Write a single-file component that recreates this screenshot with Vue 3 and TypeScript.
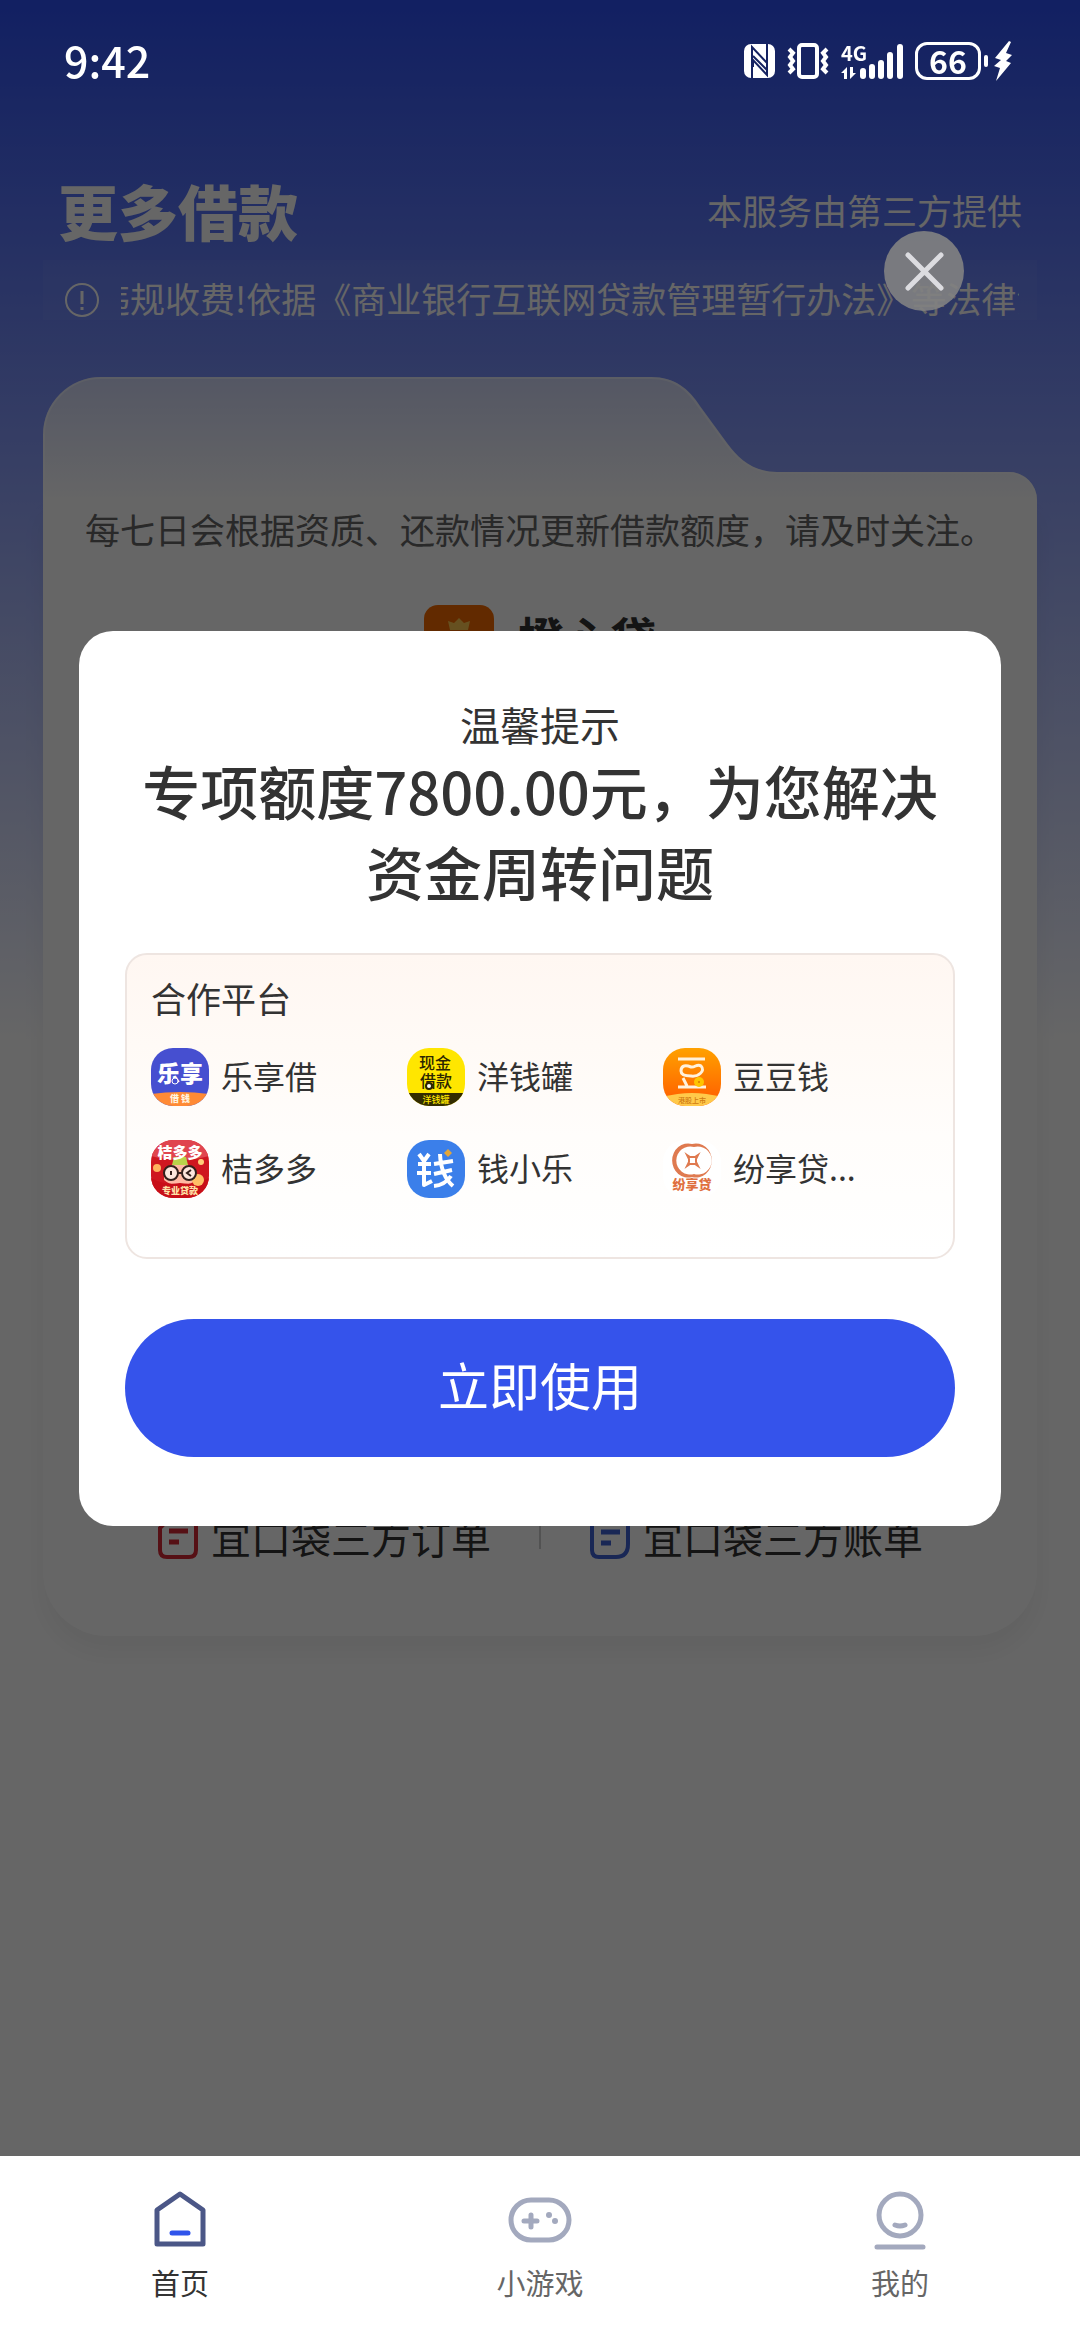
<script setup lang="ts">
import { ref } from 'vue'

interface Partner {
  id: string
  name: string
}

interface Tab {
  id: string
  label: string
}

const partners: Partner[] = [
  { id: 'lexiang', name: '乐享借' },
  { id: 'yangqian', name: '洋钱罐' },
  { id: 'doudou', name: '豆豆钱' },
  { id: 'jieduo', name: '桔多多' },
  { id: 'qianxiaole', name: '钱小乐' },
  { id: 'fenxiang', name: '纷享贷...' },
]

const tabs: Tab[] = [
  { id: 'home', label: '首页' },
  { id: 'game', label: '小游戏' },
  { id: 'mine', label: '我的' },
]

const activeTab = ref('home')
const dialogOpen = ref(true)
</script>

<template>
  <div class="page">
    <div class="status">
      <span class="status__time">9:42</span>
      <div class="status__icons">
        <svg width="31" height="34" viewBox="0 0 31 34">
          <rect x="0" y="0" width="31" height="34" rx="7" fill="#fff" />
          <path d="M8 34V3L23 19V12M23 0V31L9 16V23M9 12L23 26" fill="none" stroke="#152261" stroke-width="2" />
          <path d="M10 22L20 33H10Z" fill="#fff" />
        </svg>
        <svg width="42" height="36" viewBox="0 0 42 36" fill="none" stroke="#fff">
          <rect x="12" y="2" width="18" height="32" rx="3" stroke-width="4" />
          <path d="M2 6L6 10L3 14L6 18L3 22L6 26L2 30M40 6L36 10L39 14L36 18L39 22L36 26L40 30" stroke-width="4" />
        </svg>
        <svg class="signal" width="62" height="38" viewBox="0 0 62 38" fill="#fff">
          <text x="0" y="19" class="status__net">4G</text>
          <path d="M6 37V25L0 31H3V37ZM9 25V37L15 31H12V25Z" />
          <rect x="19" y="26" width="6" height="11" rx="3" />
          <rect x="28" y="22" width="6" height="15" rx="3" />
          <rect x="37" y="18" width="6" height="19" rx="3" />
          <rect x="46" y="10" width="6" height="27" rx="3" />
          <rect x="56" y="2" width="6" height="35" rx="3" />
        </svg>
        <span class="battery">
          <span class="battery__level">66</span>
          <span class="battery__nub"></span>
          <svg width="18" height="40" viewBox="0 0 18 40" fill="#fff">
            <path d="M15 0L1 17L7 19L0 25L6 27L2 40L17 22L12 20L18 14L12 12L17 1Z" />
          </svg>
        </span>
      </div>
    </div>

    <header class="head">
      <h1 class="head__title">更多借款</h1>
      <span class="head__note">本服务由第三方提供</span>
    </header>

    <div class="notice">
      <svg class="notice__icon" width="36" height="36" viewBox="0 0 36 36" fill="none" stroke="#fff" stroke-width="2">
        <circle cx="18" cy="18" r="16" />
        <path d="M18 9V22M18 25V28" stroke-width="3" />
      </svg>
      <div class="notice__text">违规收费!依据《商业银行互联网贷款管理暂行办法》等法律法规</div>
    </div>

    <main class="card">
      <svg class="card__top" viewBox="0 0 994 123">
        <defs>
          <linearGradient id="cardTop" x1="0" y1="0" x2="0" y2="1">
            <stop offset="0" stop-color="#d2d9fa" />
            <stop offset="1" stop-color="#ffffff" />
          </linearGradient>
        </defs>
        <path d="M0 124V58A58 58 0 0 1 58 0H608C632 0 646 12 657 29L684 66C696 82 710 95 734 95H966A28 28 0 0 1 994 123V124Z" fill="url(#cardTop)" />
        <path d="M1 123V58A57 57 0 0 1 58 1H608C632 1 645 13 656 30L683 67C695 83 709 96 734 96H966A27 27 0 0 1 993 123" fill="none" stroke="#fff" stroke-opacity=".45" stroke-width="2" />
      </svg>
      <div class="card__body">
        <div>
          <p class="card__tip">每七日会根据资质、还款情况更新借款额度，请及时关注。</p>
          <div class="product">
            <svg width="70" height="70" viewBox="0 0 70 70">
              <rect width="70" height="70" rx="14" fill="#f56a00" />
              <path d="M24 16L30 18L35 13L40 18L46 16L44 25H26ZM26 28H44L52 44Q54 58 42 58H28Q16 58 18 44Z" fill="#ffc850" />
            </svg>
            <strong class="product__name">橙心贷</strong>
          </div>
        </div>
        <div class="links">
          <a class="links__item" href="#orders">
            <svg width="42" height="46" viewBox="0 0 42 46" fill="none" stroke="#d62a36" stroke-width="4">
              <path d="M14 3H32Q39 3 39 10V36Q39 43 32 43H10Q3 43 3 36V14Z" />
              <path d="M12 17H31M12 28H22" stroke-width="5" />
            </svg>
            宜口袋三方订单
          </a>
          <span class="links__line"></span>
          <a class="links__item" href="#bills">
            <svg width="42" height="46" viewBox="0 0 42 46" fill="none" stroke="#3f62d4" stroke-width="4">
              <path d="M10 3H32Q39 3 39 10V30Q39 43 27 43H10Q3 43 3 36V10Q3 3 10 3Z" />
              <path d="M12 18H31M12 29H22" stroke-width="5" />
            </svg>
            宜口袋三方账单
          </a>
        </div>
      </div>
    </main>

    <div v-if="dialogOpen" class="overlay">
      <button class="close" type="button" aria-label="关闭" @click="dialogOpen = false">
        <svg width="80" height="80" viewBox="0 0 80 80">
          <path d="M24 24L57 57M57 24L24 57" stroke="#dcdce0" stroke-width="5" stroke-linecap="round" />
        </svg>
      </button>
      <section class="dialog" role="dialog" aria-modal="true">
        <p class="dialog__hint">温馨提示</p>
        <h2 class="dialog__title">专项额度7800.00元，为您解决资金周转问题</h2>
        <div class="panel">
          <h3 class="panel__title">合作平台</h3>
          <ul class="panel__grid">
            <li v-for="p in partners" :key="p.id" class="partner">
              <svg class="partner__logo" viewBox="0 0 58 58">
                <template v-if="p.id === 'lexiang'">
                  <rect width="58" height="58" fill="#464fd0" />
                  <path d="M0 46Q29 42 58 46V58H0Z" fill="#ff8a35" />
                  <text x="29" y="34" class="logo-text" font-size="23" fill="#fff">乐享</text>
                  <circle cx="24" cy="33" r="3" fill="#464fd0" stroke="#fff" />
                  <text x="29" y="54" class="logo-text" font-size="9" fill="#fff3df">借 钱</text>
                </template>
                <template v-else-if="p.id === 'yangqian'">
                  <rect width="58" height="58" fill="#ffe600" />
                  <rect y="45" width="58" height="13" fill="#332c00" />
                  <text x="28" y="21" class="logo-line" font-size="16" fill="#2b2500">现金</text>
                  <text x="29" y="39" class="logo-line" font-size="16" fill="#2b2500">借款</text>
                  <circle cx="22" cy="38" r="3" fill="#fff" stroke="#2b2500" stroke-width="2" />
                  <text x="29" y="55" class="logo-line" font-size="9" fill="#ffe600">洋钱罐</text>
                </template>
                <template v-else-if="p.id === 'doudou'">
                  <defs>
                    <linearGradient id="bean" x1="0" y1="0" x2="0" y2="1">
                      <stop offset="0" stop-color="#ffa100" />
                      <stop offset="1" stop-color="#ff5a00" />
                    </linearGradient>
                  </defs>
                  <rect width="58" height="58" fill="url(#bean)" />
                  <path d="M0 49Q29 41 58 49V58H0Z" fill="#ffc94a" />
                  <path d="M15 11H42M15 39H43M20 30L24 38" stroke="#fff1dc" stroke-width="3" fill="none" />
                  <path d="M18 23C18 17 23 17 28 19C32 20 34 15 38 18C43 23 35 29 28 28C22 28 18 27 18 23Z" stroke="#fff1dc" stroke-width="3" fill="none" />
                  <circle cx="36" cy="34" r="5" fill="#ffc400" />
                  <circle cx="36" cy="34" r="1" fill="#d67a00" />
                  <text x="29" y="55" class="logo-line" font-size="7" fill="#d07a10">港股上市</text>
                </template>
                <template v-else-if="p.id === 'jieduo'">
                  <rect width="58" height="58" fill="#cf1720" />
                  <path d="M0 0H58V16Q29 24 0 16Z" fill="#e0454f" />
                  <circle cx="6" cy="28" r="4" fill="#ffb25e" />
                  <circle cx="50" cy="22" r="3" fill="#ffcf7a" />
                  <path d="M13 40Q12 24 29 23Q46 24 45 40Q38 46 29 44Q20 46 13 40Z" fill="#ffb9a3" />
                  <path d="M0 38Q14 46 29 43Q44 46 58 38V58H0Z" fill="#c80f18" />
                  <circle cx="47" cy="40" r="6" fill="#ffbf66" />
                  <path d="M23 17H35L37 25H21Z" fill="#b9d24a" />
                  <text x="29" y="18" class="logo-text" font-size="15" fill="#fff">桔多多</text>
                  <g fill="#fde6dd" stroke="#33201c" stroke-width="2">
                    <circle cx="20" cy="33" r="7" />
                    <circle cx="38" cy="33" r="7" />
                    <path d="M27 33H31M20 31V35M40 30L36 33L40 36" fill="none" />
                  </g>
                  <text x="29" y="54" class="logo-text" font-size="9" fill="#ffe3a8">专业贷款</text>
                </template>
                <template v-else-if="p.id === 'qianxiaole'">
                  <rect width="58" height="58" fill="#3b7fea" />
                  <g fill="none" stroke="#fff" stroke-width="4" stroke-linejoin="round">
                    <path d="M12 14L17 21L22 14M11 24H24M10 33H24M17 21V45L25 41" />
                    <path d="M27 24L46 21M27 34L45 30M33 14Q34 36 46 46M44 36Q38 45 27 46" />
                  </g>
                  <path d="M41 9L45 13L41 17L37 13Z" fill="#e3a63a" />
                </template>
                <template v-else>
                  <rect width="58" height="58" fill="#fff" />
                  <path fill-rule="evenodd" d="M29 4A16 17 0 1 0 29 37A16 17 0 1 0 29 4ZM31 7A14 14 0 1 1 31 34A14 14 0 1 1 31 7Z" fill="#df7a50" />
                  <path d="M24 15L27 17H32L35 15L33 19V22L35 26L32 24H27L24 26L26 22V19Z" fill="none" stroke="#df7a50" stroke-width="2" />
                  <text x="29" y="49" class="logo-text" font-size="13" fill="#df7040">纷享贷</text>
                </template>
              </svg>
              <span class="partner__name">{{ p.name }}</span>
            </li>
          </ul>
        </div>
        <button class="cta" type="button">立即使用</button>
      </section>
    </div>

    <nav class="tabs">
      <button
        v-for="t in tabs"
        :key="t.id"
        type="button"
        class="tab"
        :class="{ 'tab--active': t.id === activeTab }"
        @click="activeTab = t.id"
      >
        <svg width="72" height="72" viewBox="0 0 72 72" fill="none" stroke-width="5" stroke-linecap="round" stroke-linejoin="round">
          <template v-if="t.id === 'home'">
            <path d="M36 10L59 26V60H13V26Z" stroke="#4b5787" />
            <path d="M28 49H44" stroke="#2f54eb" />
          </template>
          <g v-else-if="t.id === 'game'" stroke="#a3a9be">
            <rect x="7" y="16" width="58" height="40" rx="20" />
            <path d="M20 37H33M27 31V43" />
            <circle cx="45" cy="31" r="3" fill="#a3a9be" stroke="none" />
            <circle cx="51" cy="37" r="3" fill="#a3a9be" stroke="none" />
          </g>
          <g v-else stroke="#a3a9be">
            <circle cx="36" cy="31" r="21" />
            <path d="M31 41Q36 43 41 41M13 63H59" />
          </g>
        </svg>
        <span>{{ t.label }}</span>
      </button>
    </nav>
  </div>
</template>

<style>
body {
  background: #fff;
}
</style>

<style scoped>
.page {
  min-height: 100vh;
  box-sizing: border-box;
  padding-bottom: 184px;
  background: linear-gradient(180deg, #2d50f5 0, #fff 1040px);
  font-family: "Noto Sans CJK SC", "Noto Sans", sans-serif;
  color: #333;
}

h1,
h2,
h3,
p,
ul {
  margin: 0;
  padding: 0;
}

button {
  border: 0;
  padding: 0;
  font-family: inherit;
  cursor: pointer;
}

.status {
  position: relative;
  z-index: 3;
  display: flex;
  align-items: center;
  justify-content: space-between;
  height: 122px;
  padding: 0 68px 0 64px;
  color: #fff;
}

.status__time {
  padding-bottom: 4px;
  font-size: 43px;
  font-weight: 500;
}

.status__icons {
  display: flex;
  align-items: center;
  gap: 12px;
}

.status__net {
  font-size: 20px;
  font-weight: 700;
}

.signal {
  overflow: visible;
}

.battery {
  display: flex;
  align-items: center;
}

.battery__level {
  box-sizing: border-box;
  width: 66px;
  height: 38px;
  border: 3px solid #fff;
  border-radius: 12px;
  font-size: 32px;
  font-weight: 700;
  line-height: 30px;
  text-align: center;
}

.battery__nub {
  width: 4px;
  height: 12px;
  margin: 0 6px 0 3px;
  border-radius: 2px;
  background: #fff;
}

.head {
  display: flex;
  align-items: center;
  justify-content: space-between;
  padding: 43px 58px 5px;
  color: #fff;
}

.head__title {
  font-size: 60px;
  font-weight: 900;
  line-height: 90px;
}

.head__note {
  font-size: 35px;
  line-height: 50px;
}

.notice {
  display: flex;
  align-items: flex-end;
  gap: 21px;
  margin: 0 43px;
  padding: 18px 18px 2px 21px;
  background: rgba(255, 255, 255, 0.04);
  color: #fff;
}

.notice__icon {
  flex: none;
}

.notice__text {
  flex: 1;
  min-width: 0;
  overflow: hidden;
  white-space: nowrap;
  text-indent: -26px;
  font-size: 35px;
  line-height: 40px;
}

.card {
  margin: 57px 43px 0;
}

.card__top {
  display: block;
  width: 100%;
  height: auto;
}

.card__body {
  display: flex;
  flex-direction: column;
  justify-content: space-between;
  box-sizing: border-box;
  min-height: 1136px;
  padding: 4px 0 74px;
  border-radius: 0 0 64px 64px;
  background: #fff;
  box-shadow: 0 16px 24px rgba(0, 0, 0, 0.05);
}

.card__tip {
  font-size: 35px;
  line-height: 50px;
  text-align: center;
  white-space: nowrap;
  color: #666;
}

.product {
  display: flex;
  align-items: center;
  justify-content: center;
  gap: 24px;
  margin-top: 51px;
}

.product__name {
  padding-bottom: 8px;
  font-size: 46px;
  font-weight: 700;
  line-height: 62px;
}

.links {
  display: flex;
  align-items: center;
  justify-content: center;
  gap: 48px;
}

.links__item {
  display: flex;
  align-items: center;
  gap: 12px;
  font-size: 40px;
  line-height: 50px;
  color: #333;
  text-decoration: none;
}

.links__line {
  width: 2px;
  height: 24px;
  background: #ccc;
}

.overlay {
  position: fixed;
  inset: 0 0 184px;
  z-index: 2;
  display: flex;
  align-items: center;
  justify-content: center;
  padding: 0 79px;
  background: rgba(0, 0, 0, 0.6);
}

.close {
  position: absolute;
  top: 231px;
  right: 116px;
  width: 80px;
  height: 80px;
  border-radius: 50%;
  background: rgba(130, 130, 130, 0.9);
}

.close svg {
  display: block;
}

.dialog {
  flex: 1;
  box-sizing: border-box;
  padding: 67px 46px 69px;
  border-radius: 34px;
  background: #fff;
}

.dialog__hint {
  font-size: 40px;
  line-height: 52px;
  text-align: center;
}

.dialog__title {
  font-size: 58px;
  font-weight: 500;
  line-height: 81px;
  text-align: center;
}

.panel {
  box-sizing: border-box;
  margin-top: 41px;
  height: 306px;
  padding: 18px 24px;
  border: 2px solid #eee5e1;
  border-radius: 22px;
  background: linear-gradient(180deg, #fff7f2 0, #fffaf6 30%, #fffdfb 60%, #fff 100%);
}

.panel__title {
  font-size: 35px;
  font-weight: 400;
  line-height: 50px;
}

.panel__grid {
  display: grid;
  grid-template-columns: repeat(3, 1fr);
  gap: 34px 0;
  margin-top: 25px;
  padding-right: 10px;
  list-style: none;
}

.partner {
  display: flex;
  align-items: center;
  gap: 12px;
  font-size: 32px;
  line-height: 54px;
  white-space: nowrap;
}

.partner__logo {
  flex: none;
  width: 58px;
  height: 58px;
  border-radius: 22px;
}

.partner__name {
  padding-bottom: 4px;
}

.logo-text {
  font-weight: 900;
  text-anchor: middle;
}

.logo-line {
  font-weight: 500;
  text-anchor: middle;
}

.cta {
  display: block;
  width: 100%;
  height: 138px;
  margin-top: 60px;
  padding-bottom: 8px;
  border-radius: 69px;
  background: #3553eb;
  color: #fff;
  font-size: 51px;
}

.tabs {
  position: fixed;
  inset: auto 0 0;
  z-index: 3;
  display: flex;
  justify-content: space-around;
  height: 184px;
  background: #fff;
}

.tab {
  display: flex;
  flex: 1;
  flex-direction: column;
  align-items: center;
  gap: 6px;
  padding-top: 28px;
  background: none;
  font-size: 29px;
  line-height: 40px;
  color: #666;
}

.tab--active {
  color: #333;
}
</style>
